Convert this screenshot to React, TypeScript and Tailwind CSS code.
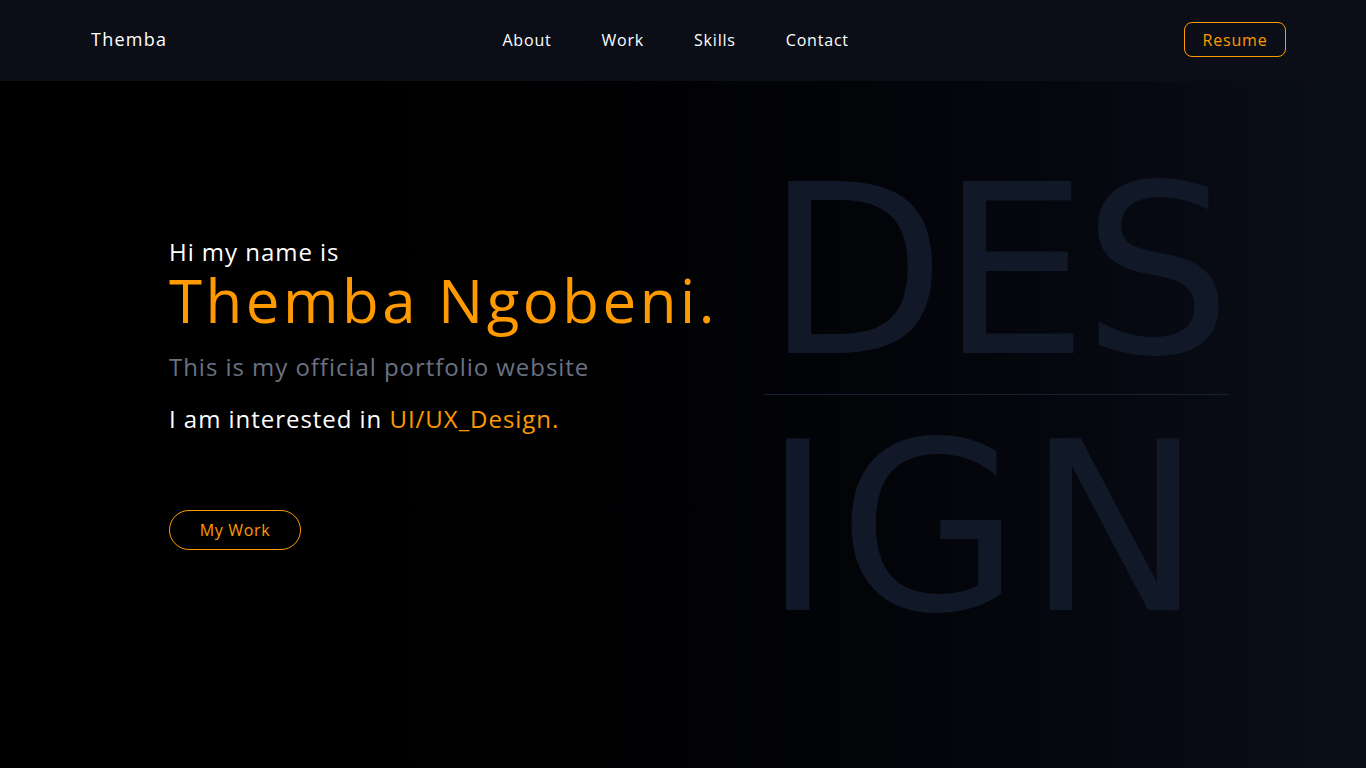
import React from "react";

const links = ["About", "Work", "Skills", "Contact"];

function Navbar() {
  return (
    <header className="h-[81px] bg-[#0b0e17] flex items-center justify-between pl-[91px] pr-[80px] pb-[2px] tracking-[0.05em]">
      <span className="text-white text-[18px] font-medium tracking-[0.07em]">Themba</span>
      <nav className="flex items-center gap-[50px]">
        {links.map((link) => (
          <a key={link} className="text-white text-[16px] font-medium cursor-pointer">
            {link}
          </a>
        ))}
      </nav>
      <button className="h-[35px] w-[102px] rounded-lg border border-amber-500 text-amber-500 text-[16px]">
        Resume
      </button>
    </header>
  );
}

function Hero() {
  return (
    <section className="flex-1 grid grid-cols-[764px_465px]">
      <div className="pl-[169px] pt-[155px] tracking-[0.06em]">
        <p className="text-white text-[24px] leading-[32px]">Hi my name is</p>
        <h1 className="text-amber-500 text-[60px] leading-[64px] tracking-[0.058em]">Themba Ngobeni.</h1>
        <p className="text-gray-500 text-[24px] leading-[32px] mt-[19px]">
          This is my official portfolio website
        </p>
        <p className="text-white text-[24px] leading-[32px] mt-[20px]">
          I am interested in <span className="text-amber-500">UI/UX_Design.</span>
        </p>
        <button className="mt-[75px] h-[40px] w-[132px] rounded-full border border-amber-500 text-amber-500 text-[16px] tracking-[0.04em]">
          My Work
        </button>
      </div>
      <div className="pt-[69px] font-['DejaVu_Sans',sans-serif] text-[#111827] text-[235px]">
        <div className="leading-[244px] ml-[1px] tracking-[-6px] whitespace-nowrap">DES</div>
        <div className="h-px bg-[#172033]" />
        <div className="leading-[268px] -ml-[1px] tracking-[6px] whitespace-nowrap">IGN</div>
      </div>
    </section>
  );
}

export default function App() {
  return (
    <div className="min-h-[768px] flex flex-col bg-gradient-to-r from-black to-[#0b0f19] font-['Open_Sans',sans-serif]">
      <Navbar />
      <Hero />
    </div>
  );
}
